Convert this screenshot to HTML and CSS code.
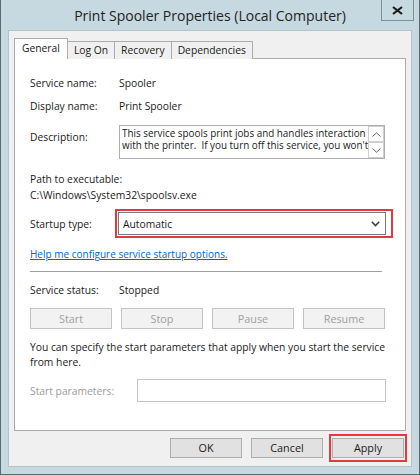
FILE: index.html
```html
<!DOCTYPE html>
<html lang="en">
<head>
<meta charset="UTF-8">
<meta name="viewport" content="width=device-width, initial-scale=1.0">
<link rel="stylesheet" href="styles.css">
</head>
<body>
<div class="window">
  <div class="titlebar">
    <div></div>
    <div class="title">Print Spooler Properties (Local Computer)</div>
    <div class="close">
      <svg width="11" height="9" viewBox="0 0 11 9"><path d="M1 1 L10 8 M10 1 L1 8" stroke="#1b1b1b" stroke-width="2.2" fill="none"/></svg>
    </div>
  </div>

  <div class="client">
    <div class="tabs">
      <div class="tab active">General</div>
      <div class="tab">Log On</div>
      <div class="tab">Recovery</div>
      <div class="tab">Dependencies</div>
    </div>

    <div class="panel">
      <div class="row first">
        <span class="label">Service name:</span>
        <span>Spooler</span>
      </div>
      <div class="row gap7">
        <span class="label">Display name:</span>
        <span>Print Spooler</span>
      </div>
      <div class="row top gap11">
        <span class="label desc-label">Description:</span>
        <div class="desc">
          <div class="desc-text">
            <div>This service spools print jobs and handles interaction</div>
            <div>with the printer.&nbsp; If you turn off this service, you won't</div>
          </div>
          <div class="scroll">
            <div class="scroll-btn"><svg width="9" height="5" viewBox="0 0 9 5"><path d="M0.5 4.5 L4.5 0.8 L8.5 4.5" stroke="#606060" fill="none"/></svg></div>
            <div class="scroll-btn"><svg width="9" height="5" viewBox="0 0 9 5"><path d="M0.5 0.5 L4.5 4.2 L8.5 0.5" stroke="#606060" fill="none"/></svg></div>
          </div>
        </div>
      </div>
      <div class="line gap12">Path to executable:</div>
      <div class="line">C:\Windows\System32\spoolsv.exe</div>
      <div class="row gap6">
        <span class="label">Startup type:</span>
        <div class="highlight select-mark">
          <div class="select">
            <span>Automatic</span>
            <svg width="9" height="6" viewBox="0 0 9 6"><path d="M0.8 0.8 L4.5 4.5 L8.2 0.8" stroke="#404040" stroke-width="1.6" fill="none"/></svg>
          </div>
        </div>
      </div>
      <div class="line gap8"><a class="link" href="#">Help me configure service startup options.</a></div>
      <div class="separator"></div>
      <div class="row gap10">
        <span class="label">Service status:</span>
        <span>Stopped</span>
      </div>
      <div class="svc-buttons">
        <div class="button disabled">Start</div>
        <div class="button disabled">Stop</div>
        <div class="button disabled">Pause</div>
        <div class="button disabled">Resume</div>
      </div>
      <p class="note">You can specify the start parameters that apply when you start the service from here.</p>
      <div class="row gap9">
        <span class="label wide disabled-text">Start parameters:</span>
        <div class="input"></div>
      </div>
    </div>

    <div class="dialog-buttons">
      <div class="button">OK</div>
      <div class="button">Cancel</div>
      <div class="highlight apply-mark">
        <div class="button">Apply</div>
      </div>
    </div>
  </div>
</div>
</body>
</html>
```

FILE: styles.css
```css
body {
  margin: 0;
  font-family: "Open Sans", "Noto Sans", sans-serif;
  font-size: 10.3px;
  color: #1a1a1a;
}

.window {
  width: 420px;
  height: 475px;
  box-sizing: border-box;
  background-color: #c6d9e0;
  border: 1px solid #5a6a71;
  border-top: none;
  padding: 0 7px 7px 7px;
  display: flex;
  flex-direction: column;
}

/* Titelleiste */
.titlebar {
  height: 30px;
  flex: none;
  display: grid;
  grid-template-columns: 1fr auto 1fr;
}

.title {
  font-size: 14px;
  line-height: 30px;
  padding-top: 1px;
  color: #222;
}

.close {
  justify-self: end;
  width: 33px;
  height: 21px;
  box-sizing: border-box;
  margin-right: -2px;
  border: 1px solid #7f9097;
  border-top: none;
  display: flex;
  align-items: center;
  justify-content: center;
}

.client {
  flex: 1;
  background-color: #f0f0f0;
  border: 1px solid #b2c3c9;
  padding: 7px 4px 0 5px;
  display: flex;
  flex-direction: column;
}

/* Reiter */
.tabs {
  display: flex;
  align-items: flex-end;
  height: 21px;
  margin-bottom: -1px;
  position: relative; /* liegt ueber dem Rahmen des Panels */
}

.tab {
  height: 18px;
  box-sizing: border-box;
  border: 1px solid #acacac;
  border-bottom: none;
  margin-left: -1px;
  padding: 0 6px;
  line-height: 17px;
  background-color: #f0f0f0;
}

.tab.active {
  height: 21px;
  margin-left: 0;
  padding: 0 7px;
  line-height: 19px;
  background-color: #fff;
}

.panel {
  height: 373px;
  box-sizing: border-box;
  margin-right: 1px;
  background-color: #fff;
  border: 1px solid #acacac;
  padding: 16px 15px 0 15px;
}

.row {
  display: flex;
  align-items: center;
  line-height: 16px;
}

.row.top {
  align-items: flex-start;
}

.label {
  width: 89px;
  flex: none;
}

.label.wide {
  width: 107px;
}

.desc-label {
  padding-top: 4px;
}

.line {
  line-height: 16px;
}

.gap6 { margin-top: 6px; }
.gap7 { margin-top: 7px; }
.gap8 { margin-top: 8px; }
.gap9 { margin-top: 9px; }
.gap10 { margin-top: 10px; }
.gap11 { margin-top: 11px; }
.gap12 { margin-top: 12px; }

/* Beschreibung mit Scrollleiste */
.desc {
  width: 266px;
  height: 34px;
  box-sizing: border-box;
  border: 1px solid #abadb3;
  display: flex;
}

.desc-text {
  flex: 1;
  overflow: hidden;
  white-space: nowrap;
  padding: 1px 0 0 2px;
  font-size: 9.9px;
  line-height: 12px;
}

.scroll {
  width: 16px;
  flex: none;
  display: flex;
  flex-direction: column;
}

.scroll-btn {
  flex: 1;
  box-sizing: border-box;
  border: 1px solid #cfcfcf;
  display: flex;
  align-items: center;
  justify-content: center;
}

/* rote Markierung */
.highlight {
  border: 2px solid #e0393e;
}

.select-mark {
  margin-left: -4px;
  padding: 1px 5px 1px 1px;
}

.select {
  width: 268px;
  height: 23px;
  box-sizing: border-box;
  border: 1px solid #7a7a7a;
  background-color: #fff;
  padding: 0 5px 0 4px;
  display: flex;
  align-items: center;
  justify-content: space-between;
}

.link {
  color: #0066cc;
  font-size: 10px;
}

.separator {
  margin-top: 9px;
  width: 352px;
  height: 1px;
  background-color: #a0a0a0;
}

.svc-buttons {
  margin-top: 10px;
  width: 355px;
  display: flex;
  justify-content: space-between;
}

.button {
  width: 72px;
  height: 20px;
  box-sizing: border-box;
  border: 1px solid #adadad;
  background-color: #e1e1e1;
  text-align: center;
  line-height: 18px;
  font-size: 10.8px;
}

.svc-buttons .button {
  width: 82px;
  height: 21px;
  line-height: 19px;
}

.button.disabled {
  border-color: #c4c4c4;
  background-color: #f2f2f2;
  color: #a0a0a0;
}

.note {
  margin: 11px 0 0 0;
  width: 360px;
  line-height: 15px;
}

.disabled-text {
  color: #9c9c9c;
}

.input {
  width: 249px;
  height: 23px;
  box-sizing: border-box;
  border: 1px solid #c4c4c4;
}

.dialog-buttons {
  margin-top: 3px;
  display: flex;
  justify-content: flex-end;
  align-items: center;
  gap: 9px;
}

.apply-mark {
  margin-left: -3px;
  padding: 2px 1px;
}
```
